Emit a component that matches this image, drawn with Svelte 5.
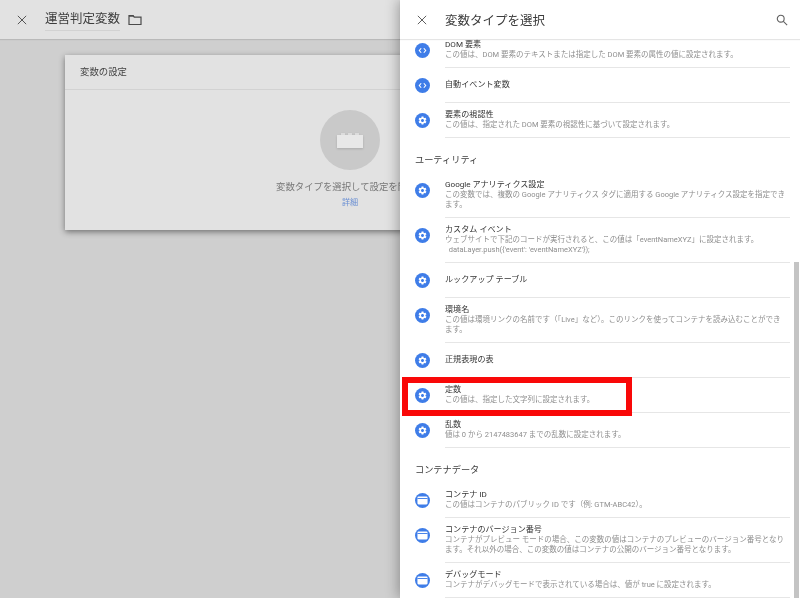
<script>
  const code = 'code', gear = 'gear', box = 'box';
  const groups = [
    { items: [
      { icon: code, t: 'DOM 要素', d: ['この値は、DOM 要素のテキストまたは指定した DOM 要素の属性の値に設定されます。'] },
      { icon: code, t: '自動イベント変数' },
      { icon: gear, t: '要素の視認性', d: ['この値は、指定された DOM 要素の視認性に基づいて設定されます。'] }
    ] },
    { head: 'ユーティリティ', items: [
      { icon: gear, t: 'Google アナリティクス設定', d: ['この変数では、複数の Google アナリティクス タグに適用する Google アナリティクス設定を指定でき', 'ます。'] },
      { icon: gear, t: 'カスタム イベント', d: ['ウェブサイトで下記のコードが実行されると、この値は「eventNameXYZ」に設定されます。', '\u00a0\u00a0dataLayer.push({\'event\': \'eventNameXYZ\'});'] },
      { icon: gear, t: 'ルックアップ テーブル' },
      { icon: gear, t: '環境名', d: ['この値は環境リンクの名前です（「Live」など）。このリンクを使ってコンテナを読み込むことができ', 'ます。'] },
      { icon: gear, t: '正規表現の表' },
      { icon: gear, t: '定数', d: ['この値は、指定した文字列に設定されます。'] },
      { icon: gear, t: '乱数', d: ['値は 0 から 2147483647 までの乱数に設定されます。'] }
    ] },
    { head: 'コンテナデータ', items: [
      { icon: box, t: 'コンテナ ID', d: ['この値はコンテナのパブリック ID です（例: GTM-ABC42）。'] },
      { icon: box, t: 'コンテナのバージョン番号', d: ['コンテナがプレビュー モードの場合、この変数の値はコンテナのプレビューのバージョン番号となり', 'ます。それ以外の場合、この変数の値はコンテナの公開のバージョン番号となります。'] },
      { icon: box, t: 'デバッグモード', d: ['コンテナがデバッグモードで表示されている場合は、値が true に設定されます。'] }
    ] }
  ];
</script>

<div class="page">
  <div class="editor">
    <header class="bar">
      <svg class="x" viewBox="0 0 12 12"><path d="M1 1l10 10M11 1L1 11" /></svg>
      <span class="name soft">運営判定変数</span>
      <svg class="folder" viewBox="0 0 14 12"><path d="M1 1.5h4l1.2 1.6H13v7.4H1z" /><path class="tab" d="M1 1h4.2l1.4 1.8H1z" /></svg>
    </header>
    <section class="card">
      <div class="card-head soft">変数の設定</div>
      <div class="card-body">
        <div class="circle">
          <svg viewBox="0 0 26 15" class="brick">
            <path d="M4 0h4v2H4zM11 0h4v2h-4zM18 0h4v2h-4z" fill="#dcdcdc" />
            <rect y="2" width="26" height="13" fill="#e8e8e8" />
          </svg>
        </div>
        <p class="hint soft">変数タイプを選択して設定を開始...</p>
        <span class="more soft">詳細</span>
      </div>
    </section>
  </div>

  <aside class="panel">
    <header class="panel-bar">
      <svg class="x dark" viewBox="0 0 12 12"><path d="M1 1l10 10M11 1L1 11" /></svg>
      <span class="panel-title soft">変数タイプを選択</span>
      <svg class="search" viewBox="0 0 14 14"><circle cx="5.5" cy="5.5" r="4" /><path d="M8.6 8.6l4.4 4.4" /></svg>
    </header>
    <div class="scroll">
      <div class="list">
        {#each groups as g}
          {#if g.head}<h3 class="group soft">{g.head}</h3>{/if}
          {#each g.items as it}
            <div class="row">
              <span class="badge">
                {#if it.icon === 'code'}
                  <svg viewBox="0 0 16 16"><path class="chev" d="M6.6 5.6L4.6 8l2 2.4M9.4 5.6l2 2.4-2 2.4" /></svg>
                {:else if it.icon === 'gear'}
                  <svg viewBox="-6 -6 36 36"><path fill="#fff" d="M19.14 12.94c.04-.3.06-.61.06-.94 0-.32-.02-.64-.07-.94l2.03-1.58c.18-.14.23-.41.12-.61l-1.92-3.32c-.12-.22-.37-.29-.59-.22l-2.39.96c-.5-.38-1.03-.7-1.62-.94l-.36-2.54c-.04-.24-.24-.41-.48-.41h-3.84c-.24 0-.43.17-.47.41l-.36 2.54c-.59.24-1.13.57-1.62.94l-2.39-.96c-.22-.08-.47 0-.59.22L2.74 8.87c-.12.21-.08.47.12.61l2.03 1.58c-.05.3-.09.63-.09.94s.02.64.07.94l-2.03 1.58c-.18.14-.23.41-.12.61l1.92 3.32c.12.22.37.29.59.22l2.39-.96c.5.38 1.03.7 1.62.94l.36 2.54c.05.24.24.41.48.41h3.84c.24 0 .44-.17.47-.41l.36-2.54c.59-.24 1.13-.56 1.62-.94l2.39.96c.22.08.47 0 .59-.22l1.92-3.32c.12-.22.07-.47-.12-.61l-2.01-1.58zM12 15.6c-1.98 0-3.6-1.62-3.6-3.6s1.62-3.6 3.6-3.6 3.6 1.62 3.6 3.6-1.62 3.6-3.6 3.6z" /></svg>
                {:else}
                  <svg viewBox="0 0 16 16"><path fill="#fff" d="M2.6 5Q2.6 3.8 3.8 3.8h8.4Q13.4 3.8 13.4 5v6q0 1.2-1.2 1.2H3.8q-1.2 0-1.2-1.2z" /><rect x="2.6" y="5.4" width="10.8" height="1" fill="#3f7de8" /></svg>
                {/if}
              </span>
              <div class="text">
                <div class="title soft">{it.t}</div>
                {#if it.d}{#each it.d as line}<div class="desc soft">{line}</div>{/each}{/if}
              </div>
            </div>
          {/each}
        {/each}
      </div>
      <div class="thumb"></div>
    </div>
    <div class="highlight"></div>
  </aside>
</div>

<style>
  :global(body) { margin: 0; }
  .page {
    width: 800px; height: 598px; display: flex; overflow: hidden; position: relative;
    font-family: Roboto, "Noto Sans CJK JP", sans-serif; background: #cfcfcf;
  }
  .soft { filter: blur(.3px); }
  .editor { width: 400px; flex: none; position: relative; }
  .bar {
    height: 39px; background: #e2e2e2; display: flex; align-items: center;
    padding-left: 17px; box-shadow: 0 1px 1px rgba(0,0,0,.1);
  }
  .x { width: 10px; height: 10px; fill: none; stroke: #555; stroke-width: 1.2; flex: none; }
  .x.dark { stroke: #5f5f5f; }
  .name {
    margin-left: 18px; width: 75px; font-size: 12.5px; line-height: 20px; color: #3c3c3c;
    border-bottom: 1px solid #d2d2d2; padding-bottom: 1px; white-space: nowrap;
  }
  .folder { width: 14px; height: 12px; margin-left: 8px; fill: none; stroke: #4a4a4a; stroke-width: 1.2; }
  .tab { fill: #4a4a4a; stroke: none; }
  .card {
    margin: 16px 0 0 65px; width: 560px; height: 175px; background: #e2e2e2;
    box-shadow: 0 2px 6px rgba(0,0,0,.45); position: relative;
  }
  .card-head {
    height: 34px; line-height: 33px; padding-left: 15px; font-size: 9.4px; color: #444;
    border-bottom: 1px solid #d2d2d2;
  }
  .card-body { width: 580px; margin-left: -5px; display: flex; flex-direction: column; align-items: center; padding-top: 20px; }
  .circle {
    width: 60px; height: 60px; border-radius: 50%; background: #c9c9c9;
    display: flex; align-items: center; justify-content: center;
  }
  .brick { width: 26px; height: 15px; filter: drop-shadow(0 1px 1px rgba(0,0,0,.15)); }
  .hint { margin: 10px 0 0; font-size: 9.4px; line-height: 14px; color: #777; white-space: nowrap; }
  .more { margin-top: 1px; font-size: 8.1px; line-height: 14px; color: #6a8fd3; }
  .panel {
    width: 400px; flex: none; background: #fff; position: relative; z-index: 2;
    box-shadow: -2px 0 12px rgba(0,0,0,.3); display: flex; flex-direction: column;
  }
  .panel-bar {
    height: 39px; flex: none; display: flex; align-items: center; padding: 0 12px 0 17px;
    background: #fff; position: relative; z-index: 1; box-shadow: 0 1px 1px rgba(0,0,0,.1);
  }
  .panel-title { margin-left: 18px; flex: 1; font-size: 12.5px; color: #3c3c3c; }
  .search { width: 12px; height: 12px; fill: none; stroke: #616161; stroke-width: 1.3; }
  .scroll { flex: 1; overflow: hidden; position: relative; }
  .list { margin-top: -6px; }
  .group {
    margin: 0; height: 35px; line-height: 43px; padding-left: 15px; font-size: 9.2px;
    font-weight: 400; color: #3c3c3c; box-sizing: border-box;
  }
  .row { display: flex; align-items: flex-start; }
  .badge {
    width: 15px; height: 15px; margin: 10px 15px 0; border-radius: 50%; background: #3f7de8; flex: none;
    display: flex;
  }
  .badge svg { width: 15px; height: 15px; }
  .chev { fill: none; stroke: #fff; stroke-width: 1.2; }
  .text {
    flex: none; width: 345px; min-height: 35px; box-sizing: border-box; padding: 6px 0 7px;
    display: flex; flex-direction: column; justify-content: center; border-bottom: 1px solid #e6e6e6;
  }
  .title { font-size: 8.1px; line-height: 11px; color: #333; white-space: nowrap; }
  .desc { font-size: 7.5px; line-height: 10px; color: #8e8e8e; white-space: nowrap; }
  .thumb { position: absolute; right: 1px; top: 223px; bottom: 0; width: 5px; background: #c4c4c4; }
  .highlight {
    position: absolute; left: 2px; top: 377px; width: 218px; height: 27px;
    border: 6px solid #f90808;
  }
</style>
